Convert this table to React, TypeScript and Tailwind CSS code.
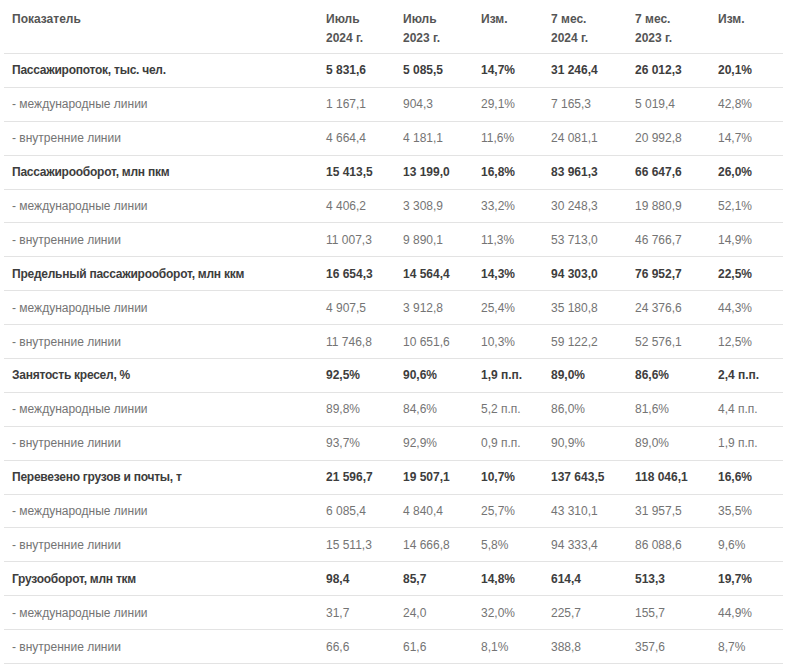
import React from 'react';

type Row = { label: string; values: string[]; bold?: boolean };

const sub = (intl: string[], dom: string[]): Row[] => [
    { label: '- международные линии', values: intl },
    { label: '- внутренние линии', values: dom },
];

const rows: Row[] = [
    { label: 'Пассажиропоток, тыс. чел.', values: ['5 831,6', '5 085,5', '14,7%', '31 246,4', '26 012,3', '20,1%'], bold: true },
    ...sub(['1 167,1', '904,3', '29,1%', '7 165,3', '5 019,4', '42,8%'], ['4 664,4', '4 181,1', '11,6%', '24 081,1', '20 992,8', '14,7%']),
    { label: 'Пассажирооборот, млн пкм', values: ['15 413,5', '13 199,0', '16,8%', '83 961,3', '66 647,6', '26,0%'], bold: true },
    ...sub(['4 406,2', '3 308,9', '33,2%', '30 248,3', '19 880,9', '52,1%'], ['11 007,3', '9 890,1', '11,3%', '53 713,0', '46 766,7', '14,9%']),
    { label: 'Предельный пассажирооборот, млн ккм', values: ['16 654,3', '14 564,4', '14,3%', '94 303,0', '76 952,7', '22,5%'], bold: true },
    ...sub(['4 907,5', '3 912,8', '25,4%', '35 180,8', '24 376,6', '44,3%'], ['11 746,8', '10 651,6', '10,3%', '59 122,2', '52 576,1', '12,5%']),
    { label: 'Занятость кресел, %', values: ['92,5%', '90,6%', '1,9 п.п.', '89,0%', '86,6%', '2,4 п.п.'], bold: true },
    ...sub(['89,8%', '84,6%', '5,2 п.п.', '86,0%', '81,6%', '4,4 п.п.'], ['93,7%', '92,9%', '0,9 п.п.', '90,9%', '89,0%', '1,9 п.п.']),
    { label: 'Перевезено грузов и почты, т', values: ['21 596,7', '19 507,1', '10,7%', '137 643,5', '118 046,1', '16,6%'], bold: true },
    ...sub(['6 085,4', '4 840,4', '25,7%', '43 310,1', '31 957,5', '35,5%'], ['15 511,3', '14 666,8', '5,8%', '94 333,4', '86 088,6', '9,6%']),
    { label: 'Грузооборот, млн ткм', values: ['98,4', '85,7', '14,8%', '614,4', '513,3', '19,7%'], bold: true },
    ...sub(['31,7', '24,0', '32,0%', '225,7', '155,7', '44,9%'], ['66,6', '61,6', '8,1%', '388,8', '357,6', '8,7%']),
];

const headers: [string, string?][] = [
    ['Показатель'],
    ['Июль', '2024 г.'],
    ['Июль', '2023 г.'],
    ['Изм.'],
    ['7 мес.', '2024 г.'],
    ['7 мес.', '2023 г.'],
    ['Изм.'],
];

const cols = 'grid grid-cols-[314px_77px_78px_70px_84px_83px_73px]';

export default function App() {
    return (
        <div className="w-[800px] h-[664px] bg-white overflow-hidden pl-[4px]" style={{ fontFamily: '"Liberation Sans", Arial, sans-serif' }}>
            <div className="w-[779px] text-[12px]">
                <div className={`${cols} h-[54px] border-b border-[#e3e3e3] pt-[10px] font-bold text-[#555] leading-[19px]`}>
                    {headers.map((h, i) => (
                        <div key={i} className="px-[8px]">
                            <div>{h[0]}</div>
                            {h[1] && <div>{h[1]}</div>}
                        </div>
                    ))}
                </div>
                {rows.map((r, i) => (
                    <div
                        key={i}
                        className={`${cols} h-[33.9px] items-center border-b border-[#e3e3e3] ${r.bold ? 'font-bold text-[#3d3d3d]' : 'text-[#747474]'}`}
                    >
                        <div className={`px-[8px] whitespace-nowrap ${r.bold ? 'tracking-[-0.25px]' : ''}`}>{r.label}</div>
                        {r.values.map((v, j) => (
                            <div key={j} className="px-[8px] whitespace-nowrap">{v}</div>
                        ))}
                    </div>
                ))}
            </div>
        </div>
    );
}
